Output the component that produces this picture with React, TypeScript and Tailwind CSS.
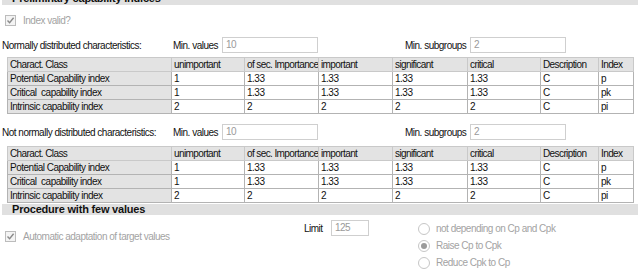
const cols = [164, 73, 74, 74, 75, 73, 58, 35];
const head = ["Charact. Class", "unimportant", "of sec. Importance", "important", "significant", "critical", "Description", "Index"];
const rows = [
  ["Potential Capability index", "1", "1.33", "1.33", "1.33", "1.33", "C", "p"],
  ["Critical  capability index", "1", "1.33", "1.33", "1.33", "1.33", "C", "pk"],
  ["Intrinsic capability index", "2", "2", "2", "2", "2", "C", "pi"],
];

function Grid() {
  return (
    <table className="ml-[7px] table-fixed border-collapse border border-[#c4c4c4]" style={{ width: 626 }}>
      <colgroup>
        {cols.map((w, i) => (
          <col key={i} style={{ width: w }} />
        ))}
      </colgroup>
      <thead>
        <tr className="h-[14px]">
          {head.map((h) => (
            <th key={h} className="overflow-hidden border border-[#c9c9c9] bg-[#e3e3e3] pl-[2px] pr-0 text-left font-normal leading-[13px] tracking-[-0.6px] whitespace-pre">
              {h}
            </th>
          ))}
        </tr>
      </thead>
      <tbody>
        {rows.map((r) => (
          <tr key={r[0]} className="h-[14px]">
            {r.map((c, i) => (
              <td
                key={i}
                className={`border border-[#b3b3b3] px-[2px] leading-[13px] whitespace-pre ${i === 0 ? "bg-[#e3e3e3]" : "bg-white"}`}
              >
                {c}
              </td>
            ))}
          </tr>
        ))}
      </tbody>
    </table>
  );
}

function Box({ value, w }: { value: string; w: string }) {
  return (
    <div className={`${w} h-[16px] border border-[#cfcfcf] bg-white px-[3px] text-[#9a9a9a] leading-[14px]`}>{value}</div>
  );
}

function Check({ label }: { label: string }) {
  return (
    <div className="flex items-center gap-[7px] pl-[5px]">
      <div className="flex h-[11px] w-[11px] items-center justify-center border border-[#bcbcbc] bg-[#f4f4f4]">
        <svg width="9" height="9" viewBox="0 0 9 9">
          <path d="M1.5 4.5 L3.6 6.7 L7.6 1.8" fill="none" stroke="#8a8a8a" strokeWidth="1.4" />
        </svg>
      </div>
      <span className="whitespace-nowrap text-[#a3a3a3]">{label}</span>
    </div>
  );
}

function Radio({ label, on }: { label: string; on?: boolean }) {
  return (
    <div className="flex h-[17px] items-center gap-[6px]">
      <div className="flex h-[12px] w-[12px] items-center justify-center rounded-full border border-[#c6c6c6] bg-white">
        {on && <div className="h-[6px] w-[6px] rounded-full bg-[#9b9b9b]" />}
      </div>
      <span className="whitespace-nowrap text-[#a3a3a3]">{label}</span>
    </div>
  );
}

function Limits({ label }: { label: string }) {
  return (
    <div className="flex h-[16px] items-center whitespace-nowrap">
      <span className="w-[173px] pl-[2px]">{label}</span>
      <span className="w-[49px]">Min. values</span>
      <Box value="10" w="w-[96px]" />
      <span className="ml-[87px] w-[65px]">Min. subgroups</span>
      <Box value="2" w="w-[96px]" />
    </div>
  );
}

export default function App() {
  return (
    <div
      className="h-[276px] w-[640px] overflow-hidden bg-white text-[10px] tracking-[-0.5px] text-[#111]"
      style={{ fontFamily: '"Liberation Sans", Arial, sans-serif' }}
    >
      <div className="mx-[2px] -mt-[9px] h-[14px] bg-[#e0e0e0] pl-[10px] text-[11px] font-bold leading-[14px] tracking-[-0.2px]">
        Preliminary capability indices
      </div>
      <div className="mt-[8px]">
        <Check label="Index valid?" />
      </div>
      <div className="mt-[9px]">
        <Limits label="Normally distributed characteristics:" />
      </div>
      <div className="mt-[4px]">
        <Grid />
      </div>
      <div className="mt-[10px]">
        <Limits label="Not normally distributed characteristics:" />
      </div>
      <div className="mt-[6px]">
        <Grid />
      </div>
      <div className="mx-[2px] mt-[1px] h-[11px] bg-[#e0e0e0] pl-[10px] text-[11px] font-bold leading-[11px] tracking-[-0.2px]">
        Procedure with few values
      </div>
      <div className="mt-[5px] flex">
        <div className="w-[304px] pt-[9px]">
          <Check label="Automatic adaptation of target values" />
        </div>
        <div className="flex h-[16px] items-center">
          <span className="w-[27px]">Limit</span>
          <Box value="125" w="w-[38px]" />
        </div>
        <div className="ml-[49px] flex flex-col">
          <Radio label="not depending on Cp and Cpk" />
          <Radio label="Raise Cp to Cpk" on />
          <Radio label="Reduce Cpk to Cp" />
        </div>
      </div>
    </div>
  );
}
